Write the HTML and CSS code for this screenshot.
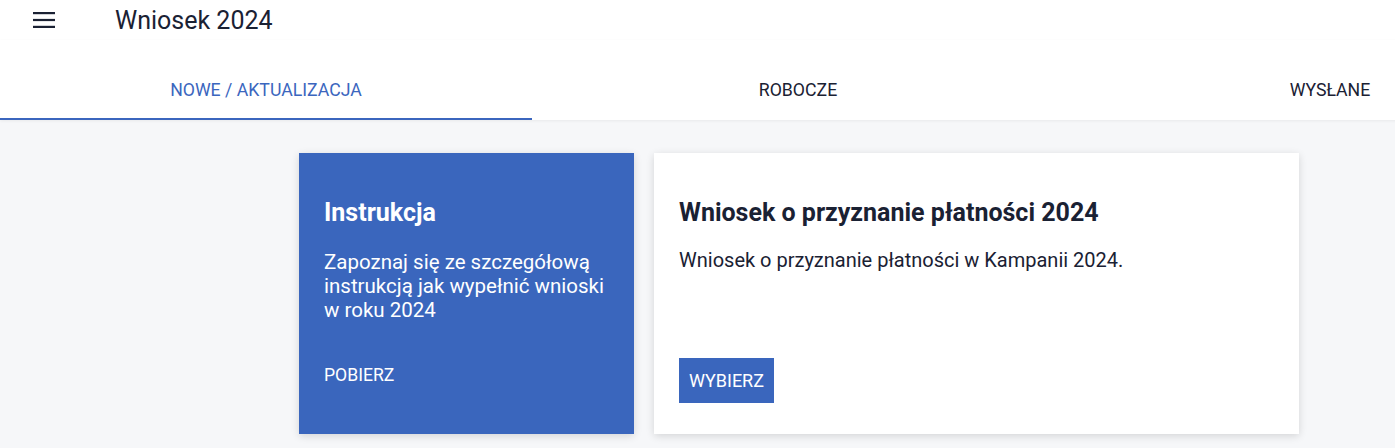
FILE: index.html
```html
<!DOCTYPE html>
<html lang="pl">
<head>
<meta charset="utf-8">
<title>Wniosek 2024</title>
<link rel="stylesheet" href="styles.css">
</head>
<body>
<div class="page">
  <header class="topbar">
    <button class="menu-btn" aria-label="Menu">
      <svg width="22" height="16" viewBox="0 0 22 16"><rect x="0" y="0" width="22" height="2.2"/><rect x="0" y="6.9" width="22" height="2.2"/><rect x="0" y="13.8" width="22" height="2.2"/></svg>
    </button>
    <h1 class="title">Wniosek 2024</h1>
  </header>
  <nav class="tabs">
    <a class="tab active">NOWE / AKTUALIZACJA</a>
    <a class="tab">ROBOCZE</a>
    <a class="tab">WYSŁANE</a>
  </nav>
  <main class="content">
    <div class="cards">
      <section class="card card-blue">
        <h2 class="card-title">Instrukcja</h2>
        <p class="card-text">Zapoznaj się ze szczegółową instrukcją jak wypełnić wnioski w roku 2024</p>
        <a class="link-btn">POBIERZ</a>
      </section>
      <section class="card card-white">
        <h2 class="card-title">Wniosek o przyznanie płatności 2024</h2>
        <p class="card-text">Wniosek o przyznanie płatności w Kampanii 2024.</p>
        <a class="solid-btn">WYBIERZ</a>
      </section>
    </div>
  </main>
</div>
</body>
</html>
```
FILE: styles.css
```css
html, body {
  margin: 0;
  padding: 0;
  overflow: hidden;
  height: 100%;
}
body {
  font-family: Roboto, "Liberation Sans", sans-serif;
  color: #1a2133;
  background: #f6f7f9;
}
.page {
  width: 1596px;
  min-height: 448px;
  background: #f6f7f9;
}
.topbar {
  height: 40px;
  display: flex;
  align-items: center;
  background: #fff;
}
.menu-btn {
  border: 0;
  background: none;
  padding: 0;
  margin-left: 33px;
  width: 22px;
  height: 16px;
  display: flex;
  fill: #1a2133;
}
.title {
  margin: 0 0 0 60px;
  font-size: 25px;
  font-weight: 400;
  color: #1a2133;
}
.tabs {
  display: flex;
  background: #fff;
  padding-top: 16px;
  box-shadow: 0 1px 3px rgba(0,0,0,0.06);
  position: relative;
}
.tab {
  width: 532px;
  height: 64px;
  box-sizing: border-box;
  padding-top: 5px;
  display: flex;
  align-items: center;
  justify-content: center;
  font-size: 17.7px;
  color: #1a2133;
  border-bottom: 2px solid transparent;
}
.tab.active {
  color: #3b66be;
  border-bottom-color: #3b66be;
}
.content {
  padding-top: 33px;
  padding-left: 2px;
}
.cards {
  width: 1000px;
  margin: 0 auto;
  display: grid;
  grid-template-columns: 335px 645px;
  gap: 20px;
}
.card {
  height: 281px;
  box-sizing: border-box;
  padding: 24px 25px;
  display: flex;
  flex-direction: column;
  box-shadow: 0 2px 8px rgba(0,0,0,0.14);
}
.card-blue {
  background: #3a66bd;
  color: #fff;
}
.card-white {
  background: #fff;
  color: #1a2133;
}
.card-title {
  margin: 21px 0 0;
  font-size: 25px;
  line-height: 30px;
  font-weight: 700;
}
.card-text {
  margin: 22px 0 0;
  font-size: 20.5px;
  line-height: 24px;
}
.card-white .card-text {
  font-size: 20px;
  margin-top: 20px;
}
.link-btn {
  margin-top: auto;
  margin-bottom: 25px;
  font-size: 17.6px;
}
.solid-btn {
  margin-top: auto;
  align-self: flex-start;
  background: #3a66bd;
  color: #fff;
  font-size: 18px;
  padding: 0 10px;
  height: 45px;
  display: flex;
  align-items: center;
  margin-bottom: 7px;
}
```
